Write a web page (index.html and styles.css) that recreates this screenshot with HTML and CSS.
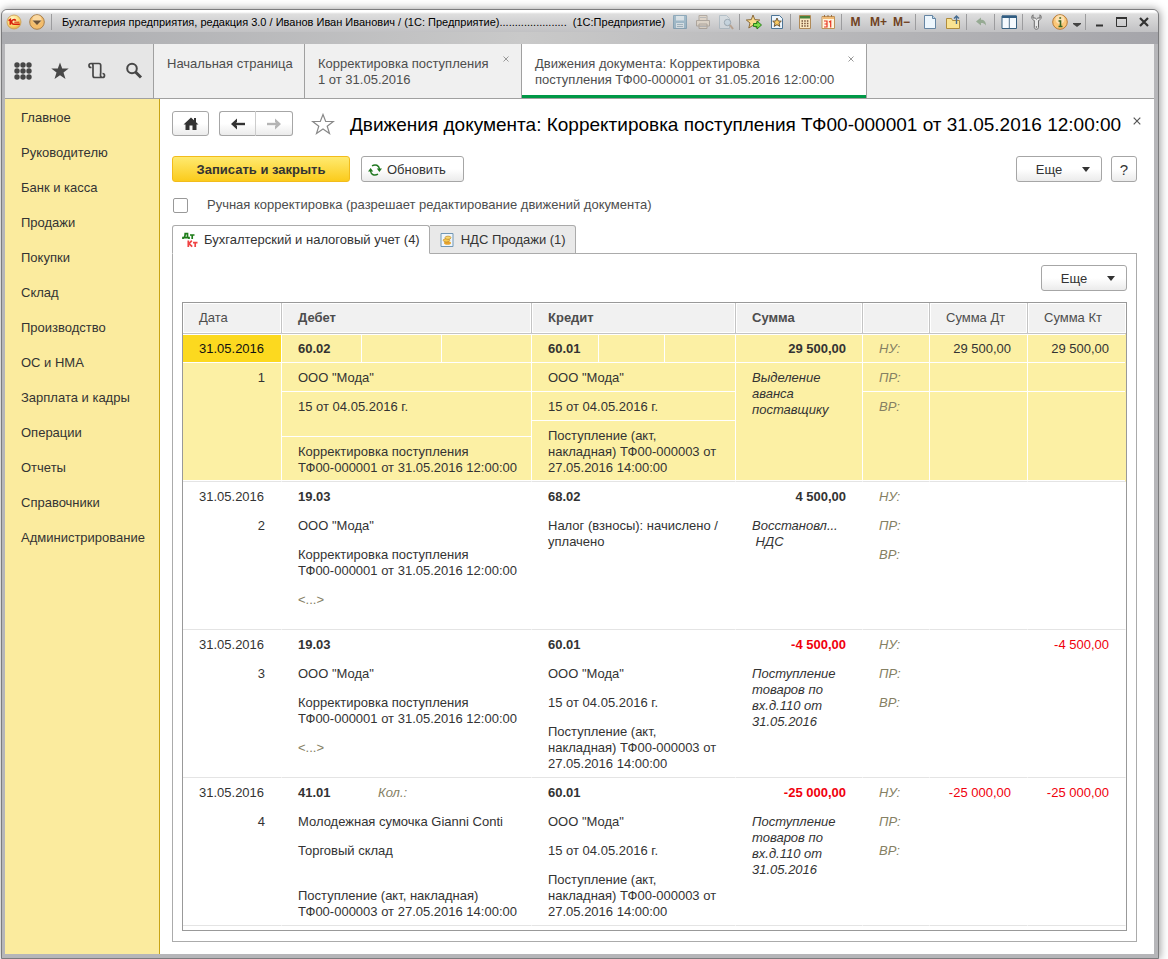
FILE: index.html
```html
<!DOCTYPE html>
<html lang="ru">
<head>
<meta charset="utf-8">
<title>Движения документа</title>
<link rel="stylesheet" href="styles.css">
</head>
<body>
<div class="window">
  <header class="titlebar">
    <svg class="logo" viewBox="0 0 16 16"><defs><radialGradient id="gold" cx=".4" cy=".3" r=".8"><stop offset="0" stop-color="#fffbd0"/><stop offset=".6" stop-color="#fbd66b"/><stop offset="1" stop-color="#d99a3c"/></radialGradient></defs><circle cx="8" cy="8" r="7" fill="url(#gold)" stroke="#c99a55" stroke-width=".8"/><path d="M2.500 6.600 4.300 5.500V10.800M9.800 6.600A2.300 2.300 0 1 0 8.300 10.200H13.800" fill="none" stroke="#d8200c" stroke-width="1.600"/><path d="M8.300 8.200h5" stroke="#d8200c"/></svg>
    <button class="round" aria-label="Меню"><svg viewBox="0 0 16 16"><circle cx="8" cy="8" r="7.300" fill="#f3bd6c" stroke="#a87f4c"/><circle cx="8" cy="5.500" r="4.500" fill="#fde6b8" opacity=".7"/><path d="M3.500 6.500h9L8 11z" fill="#6b5238"/></svg></button>
    <i class="sep"></i>
    <div class="caption">Бухгалтерия предприятия, редакция 3.0 / Иванов Иван Иванович / (1С: Предприятие)......................  (1С:Предприятие)</div>
    <div class="tools">
      <button class="dim" aria-label="Сохранить"><svg viewBox="0 0 16 16"><path d="M1.500 1.500h13v13h-13z" fill="#6fa0bd" stroke="#46799a"/><path d="M4 2h8v4.500H4zM4 9h8v5H4z" fill="#dcecf4"/><path d="M5 10.500h6M5 12.500h6" stroke="#7597aa"/></svg></button>
      <button class="dim" aria-label="Печать"><svg viewBox="0 0 16 16"><path d="M4 6V1.500h8V6M1.500 12V6.500h13V12zM4 10h8v4.500H4z" fill="#e5d3bb" stroke="#8b7c6b"/><path d="M5 3.500h6M5 12.500h6" stroke="#999"/></svg></button>
      <button class="dim" aria-label="Просмотр"><svg viewBox="0 0 16 16"><path d="M1.500 1.500h7l3 3v10h-10z" fill="#d5e0e8" stroke="#91a7b5"/><circle cx="9.500" cy="8.500" r="3.200" fill="#b9d5e8" stroke="#667f90"/><path d="m12 11 3 4" stroke="#a57a55" stroke-width="2"/></svg></button>
      <i class="sep"></i>
      <button aria-label="Добавить в избранное"><svg viewBox="0 0 16 16"><path d="m7 1 1.800 4.600 5 .4-3.800 3 1.200 5L7 11.300 2.800 14 4 9 .3 6l5-.4z" fill="#fbdc8c" stroke="#8b6b3c"/><path d="M7.500 9.500h3.500V7l4.500 4-4.500 4v-2.500H7.500z" fill="#7fdc48" stroke="#28801c"/></svg></button>
      <button aria-label="Избранное"><svg viewBox="0 0 16 16"><path d="M2.500 1.500h8l3 3v10h-11z" fill="#eef6fd" stroke="#4d7596"/><path d="m8 4 1.300 3 3 .2L10 9.200l.8 3.200L8 10.700l-2.800 1.700.8-3.200-2.300-2 3-.2z" fill="#f8ca62" stroke="#6e5737"/></svg></button>
      <i class="sep"></i>
      <button aria-label="Калькулятор"><svg viewBox="0 0 16 16"><path d="M2.500 1.500h11v13h-11z" fill="#fbe8c2" stroke="#b08a58"/><path d="M3 2h10v2.500H3z" fill="#47823c"/><path d="M4.500 7h7M4.500 9.500h7M4.500 12h7" stroke="#765239" stroke-width="1.300" stroke-dasharray="1.500 1.200"/></svg></button>
      <button aria-label="Календарь"><svg viewBox="0 0 16 16"><path d="M2 2.500h12.500v12H2z" fill="#fff5df" stroke="#be9259"/><path d="M2.500 3h11.500v2H2.500z" fill="#f1bb77"/><path d="M4.500 1v2M8 1v2M11.500 1v2" stroke="#9b7147"/><path d="M4 7h3v6H4M4.500 10H7M9 8l1.700-1v6.500" fill="none" stroke="#e83421" stroke-width="1.200"/></svg></button>
      <i class="sep"></i>
      <button class="memory">M</button><button class="memory">M+</button><button class="memory">M−</button>
      <i class="sep"></i>
      <button aria-label="Новый"><svg viewBox="0 0 16 16"><path d="M2.500 1.500h8l3 3v10h-11z" fill="#edf6fd" stroke="#6585a3"/><path d="M10.500 1.500v3h3" fill="#c3dbea" stroke="#6585a3"/></svg></button>
      <button aria-label="Открыть"><svg viewBox="0 0 16 16"><path d="M1.500 4.500h5l1 2h7v8h-13z" fill="#fae391" stroke="#b08c3d"/><path d="M11.500 10V2M9 4.500 11.500 2 14 4.500" fill="none" stroke="#476d91" stroke-width="1.400"/></svg></button>
      <i class="sep"></i>
      <button aria-label="Назад"><svg viewBox="0 0 16 16"><path d="m3 7.500 5-4v2.300c3 0 5 2 5 5.700-1.300-2-3-2.500-5-2.500v2.500z" fill="#96aa93"/></svg></button>
      <i class="sep"></i>
      <button aria-label="Панели"><svg viewBox="0 0 16 16"><path d="M1 2h14.500v12.500H1z" fill="#f5fafe" stroke="#376080"/><path d="M1 1.500h14.500v2.500H1z" fill="#315d82"/><path d="M8.300 4v10" stroke="#54758f"/></svg></button>
      <i class="sep"></i>
      <button aria-label="Настройки"><svg viewBox="0 0 16 16"><path d="M4 .8c-2 1.700-1.500 4.700 1.300 5.700v7c0 2.300 4.200 2.300 4.200 0v-7C12.500 5.500 13 2.500 11 .8V4H8.800L7.500 5.200 6.200 4H4z" fill="#e9e9e9" stroke="#6b6b6b"/><circle cx="7.400" cy="13" r=".8" fill="#555"/></svg></button>
      <button aria-label="Справка"><svg viewBox="0 0 16 16"><circle cx="8" cy="8" r="7.300" fill="#fbc778" stroke="#b87a35"/><circle cx="8" cy="5.500" r="4.500" fill="#fdebc8" opacity=".7"/><path d="M6.500 7H8.500v5.500M6.500 12.500h4M7.300 4h1.800" fill="none" stroke="#386623" stroke-width="1.600"/></svg></button>
      <button class="narrow" aria-label="Ещё"><svg viewBox="0 0 10 16"><path d="M1 9h8v1L5 13 1 10z" fill="#444"/></svg></button>
      <i class="sep"></i>
      <button aria-label="Свернуть"><svg viewBox="0 0 16 16"><path d="M4 11.500h7" stroke="#333" stroke-width="2"/></svg></button>
      <button aria-label="Развернуть"><svg viewBox="0 0 16 16"><path d="M1.500 4h10v8.500h-10z" fill="none" stroke="#333" stroke-width="1"/><path d="M1 4h11" stroke="#333" stroke-width="2"/></svg></button>
      <button aria-label="Закрыть"><svg viewBox="0 0 16 16"><path d="m2 4 8 8M10 4l-8 8" stroke="#333" stroke-width="2.200"/></svg></button>
    </div>
  </header>

  <div class="client">
    <nav class="tabbar">
      <div class="launch">
        <button aria-label="Разделы"><svg viewBox="0 0 18 18" fill="#474747"><circle cx="3" cy="3" r="2.700"/><circle cx="9" cy="3" r="2.700"/><circle cx="15" cy="3" r="2.700"/><circle cx="3" cy="9" r="2.700"/><circle cx="9" cy="9" r="2.700"/><circle cx="15" cy="9" r="2.700"/><circle cx="3" cy="15" r="2.700"/><circle cx="9" cy="15" r="2.700"/><circle cx="15" cy="15" r="2.700"/></svg></button>
        <button aria-label="Избранное"><svg viewBox="0 0 18 18"><path d="m9 .5 2.200 6h6.500l-5.200 4 2 6.500L9 13.200 3.500 17l2-6.500-5.200-4h6.500z" fill="#474747"/></svg></button>
        <button aria-label="История"><svg viewBox="0 0 18 18"><path d="M3.500 5.500H3a2 2 0 1 1 2-2v10c0 1.400.7 2 1.700 2h7.800M3 1.500h8c1 0 1.700.7 1.700 1.700v8.300M14.500 11.500a2 2 0 1 1-2 2v-2" fill="none" stroke="#474747" stroke-width="1.700"/></svg></button>
        <button aria-label="Поиск"><svg viewBox="0 0 18 18"><circle cx="7" cy="6.500" r="4.800" fill="none" stroke="#474747" stroke-width="2"/><path d="m10.500 10 5.500 5.500" stroke="#474747" stroke-width="3"/></svg></button>
      </div>
      <div class="page-tab home"><a href="#">Начальная страница</a></div>
      <div class="page-tab second"><a href="#">Корректировка поступления<br>1 от 31.05.2016</a><button class="close" aria-label="Закрыть"><svg viewBox="0 0 6 6"><path d="m.5.5 5 5m0-5-5 5"/></svg></button></div>
      <div class="page-tab third current"><a href="#">Движения документа: Корректировка<br>поступления ТФ00-000001 от 31.05.2016 12:00:00</a><button class="close" aria-label="Закрыть"><svg viewBox="0 0 6 6"><path d="m.5.5 5 5m0-5-5 5"/></svg></button></div>
    </nav>

    <div class="body">
      <nav class="sections">
        <a href="#">Главное</a><a href="#">Руководителю</a><a href="#">Банк и касса</a><a href="#">Продажи</a><a href="#">Покупки</a><a href="#">Склад</a><a href="#">Производство</a><a href="#">ОС и НМА</a><a href="#">Зарплата и кадры</a><a href="#">Операции</a><a href="#">Отчеты</a><a href="#">Справочники</a><a href="#">Администрирование</a>
      </nav>
      <main class="form">
        <div class="heading">
          <button class="btn home-btn" aria-label="Домой"><svg viewBox="0 0 16 14"><path d="M8 .5 15.500 7.500H13.500V13H9.500V8.500h-3V13H2.500V7.500H.5z" fill="#333"/><path d="M12 1v4" stroke="#333" stroke-width="2"/></svg></button>
          <div class="history">
            <button class="btn" aria-label="Назад"><svg viewBox="0 0 16 12"><path d="M15 6H4" stroke="#333" stroke-width="2.400"/><path d="M7 .5 1 6l6 5.500V8L5 6l2-2z" fill="#333"/></svg></button>
            <button class="btn" aria-label="Вперед"><svg viewBox="0 0 16 12"><path d="M1 6h11" stroke="#b5b5b5" stroke-width="2.400"/><path d="m9 .5 6 5.500-6 5.500V8l2-2-2-2z" fill="#b5b5b5"/></svg></button>
          </div>
          <button class="star" aria-label="В избранное"><svg viewBox="0 0 24 22"><path d="m12 1.500 2.700 7h7.600l-6.100 4.700 2.300 7.300L12 16l-6.500 4.500 2.300-7.300L1.700 8.500h7.600z" fill="#fff" stroke="#888" stroke-width="1.200"/></svg></button>
          <h1>Движения документа: Корректировка поступления ТФ00-000001 от 31.05.2016 12:00:00</h1>
          <button class="form-close" aria-label="Закрыть"><svg viewBox="0 0 8 8"><path d="m.7.7 6.600 6.600m0-6.600L.7 7.300" stroke="#555" stroke-width="1.200"/></svg></button>
        </div>

        <div class="commands">
          <button class="btn primary">Записать и закрыть</button>
          <button class="btn refresh"><svg viewBox="0 0 14 12"><path d="M4 1.800c3.500-2 7-.4 7.500 3.200M10 10.200C6.500 12.200 3 10.600 2.500 7" fill="none" stroke="#217821" stroke-width="1.500"/><path d="M8.800 4.500H14L11.400 8zM0 7.500h5.200L2.600 4z" fill="#217821"/></svg>Обновить</button>
          <button class="btn more">Еще<i class="caret"></i></button>
          <button class="btn help">?</button>
        </div>

        <label class="manual"><input type="checkbox">Ручная корректировка (разрешает редактирование движений документа)</label>

        <div class="tabs" role="tablist">
          <button class="tab active" role="tab" aria-selected="true"><svg viewBox="0 0 16 16" fill="none"><path d="M1 7V5.700h6V7M2.300 5.500C3.200 4 3.200 2.700 3.200 1.700h2.300v4M8 3h4.500M10.200 3v4" stroke="#1f7d1a" stroke-width="1.700"/><path d="M6.300 8.500v6.500M9.800 8.700 7 11.700l3.200 3M11 10.700h4.500M13.200 10.700v4.300" stroke="#f04343" stroke-width="1.700"/></svg>Бухгалтерский и налоговый учет (4)</button>
          <button class="tab" role="tab" aria-selected="false"><svg viewBox="0 0 16 16"><path d="M2 1.500h12v13H2z" fill="#eff6fc" stroke="#7197b5"/><ellipse cx="8.500" cy="11" rx="3.500" ry="1.800" fill="#e7a52d"/><ellipse cx="7.500" cy="8.300" rx="3.300" ry="1.700" fill="#f7ca50" stroke="#b67c22" stroke-width=".6"/><ellipse cx="9" cy="5.700" rx="3" ry="1.600" fill="#f9d76c" stroke="#b67c22" stroke-width=".6"/></svg>НДС Продажи (1)</button>
        </div>
        <section class="panel">
          <button class="btn more">Еще<i class="caret"></i></button>
          <div class="grid">
            <table>
              <colgroup><col class="c-date"><col class="c-debit"><col class="c-credit"><col class="c-sum"><col class="c-kind"><col class="c-amt"><col class="c-amt"></colgroup>
              <thead><tr><th>Дата</th><th class="strong">Дебет</th><th class="strong">Кредит</th><th class="strong">Сумма</th><th></th><th>Сумма Дт</th><th>Сумма Кт</th></tr></thead>
              <tbody>
                <tr class="selected">
                  <td><div class="item focus">31.05.2016</div><div class="item num">1</div></td>
                  <td><div class="accounts"><b>60.02</b><span></span><span></span></div><div class="item">ООО "Мода"</div><div class="item tall">15 от 04.05.2016 г.</div><div class="item">Корректировка поступления<br>ТФ00-000001 от 31.05.2016 12:00:00</div></td>
                  <td><div class="accounts credit"><b>60.01</b><span></span><span></span></div><div class="item">ООО "Мода"</div><div class="item">15 от 04.05.2016 г.</div><div class="item">Поступление (акт,<br>накладная) ТФ00-000003 от<br>27.05.2016 14:00:00</div></td>
                  <td><div class="item num strong">29 500,00</div><div class="item note">Выделение<br>аванса<br>поставщику</div></td>
                  <td class="kind"><div class="item">НУ:</div><div class="item">ПР:</div><div class="item">ВР:</div></td>
                  <td><div class="item num">29 500,00</div><div class="item"></div><div class="item"></div></td>
                  <td><div class="item num">29 500,00</div><div class="item"></div><div class="item"></div></td>
                </tr>
                <tr>
                  <td><div class="item">31.05.2016</div><div class="item num">2</div></td>
                  <td><div class="accounts"><b>19.03</b></div><div class="item">ООО "Мода"</div><div class="item">Корректировка поступления<br>ТФ00-000001 от 31.05.2016 12:00:00</div><div class="item blank">&lt;...&gt;</div></td>
                  <td><div class="accounts credit"><b>68.02</b></div><div class="item">Налог (взносы): начислено /<br>уплачено</div></td>
                  <td><div class="item num strong">4 500,00</div><div class="item note">Восстановл...<br>&nbsp;НДС</div></td>
                  <td class="kind"><div class="item">НУ:</div><div class="item">ПР:</div><div class="item">ВР:</div></td>
                  <td></td><td></td>
                </tr>
                <tr>
                  <td><div class="item">31.05.2016</div><div class="item num">3</div></td>
                  <td><div class="accounts"><b>19.03</b></div><div class="item">ООО "Мода"</div><div class="item">Корректировка поступления<br>ТФ00-000001 от 31.05.2016 12:00:00</div><div class="item blank">&lt;...&gt;</div></td>
                  <td><div class="accounts credit"><b>60.01</b></div><div class="item">ООО "Мода"</div><div class="item">15 от 04.05.2016 г.</div><div class="item">Поступление (акт,<br>накладная) ТФ00-000003 от<br>27.05.2016 14:00:00</div></td>
                  <td><div class="item num strong negative">-4 500,00</div><div class="item note">Поступление<br>товаров по<br>вх.д.110 от<br>31.05.2016</div></td>
                  <td class="kind"><div class="item">НУ:</div><div class="item">ПР:</div><div class="item">ВР:</div></td>
                  <td></td>
                  <td><div class="item num negative">-4 500,00</div></td>
                </tr>
                <tr>
                  <td><div class="item">31.05.2016</div><div class="item num">4</div></td>
                  <td><div class="accounts"><b>41.01</b><span class="quantity">Кол.:</span></div><div class="item">Молодежная сумочка Gianni Conti</div><div class="item tall">Торговый склад</div><div class="item">Поступление (акт, накладная)<br>ТФ00-000003 от 27.05.2016 14:00:00</div></td>
                  <td><div class="accounts credit"><b>60.01</b></div><div class="item">ООО "Мода"</div><div class="item">15 от 04.05.2016 г.</div><div class="item">Поступление (акт,<br>накладная) ТФ00-000003 от<br>27.05.2016 14:00:00</div></td>
                  <td><div class="item num strong negative">-25 000,00</div><div class="item note">Поступление<br>товаров по<br>вх.д.110 от<br>31.05.2016</div></td>
                  <td class="kind"><div class="item">НУ:</div><div class="item">ПР:</div><div class="item">ВР:</div></td>
                  <td><div class="item num negative">-25 000,00</div></td>
                  <td><div class="item num negative">-25 000,00</div></td>
                </tr>
              </tbody>
            </table>
          </div>
        </section>
      </main>
    </div>
  </div>
</div>
</body>
</html>
```
FILE: styles.css
```css
* { box-sizing: border-box; }

body {
  margin: 0;
  padding: 9px 9px 0 1px;
  min-height: 100vh;
  display: flex;
  background: #fff;
  color: #333;
  font: 13px/16px "Liberation Sans", Arial, sans-serif;
}

a { color: inherit; text-decoration: none; }

button {
  margin: 0;
  padding: 0;
  border: 0;
  background: none;
  color: inherit;
  font: inherit;
}

svg { display: block; flex: none; }

.window {
  flex: 1;
  min-width: 0;
  display: flex;
  flex-direction: column;
  padding: 0 4px 4px 3px;
  border: 1px solid #7c7c7e;
  border-radius: 6px 6px 0 0;
  background: #b6b6b9;
  box-shadow: 1px 0 8px #999;
}

/* Title bar */
.titlebar {
  height: 34px;
  margin: 0 -4px 0 -3px;
  padding: 0 1px 10px 4px;
  display: flex;
  align-items: center;
  border-radius: 5px 5px 0 0;
  background:
    linear-gradient(#fff 0, #fff 2px, #dedede 4px, #c1c1c3 100%) 0 0 / 100% 22px no-repeat,
    linear-gradient(90deg, #aaabaf, #c9c9c9 45%, #a5a5aa);
}

.logo { width: 16px; height: 16px; margin-right: 7px; }
.round svg { width: 16px; height: 16px; }
.round { margin-right: 4px; }

.sep {
  flex: none;
  width: 1px;
  height: 16px;
  margin: 0 2px;
  background: #9c9c9e;
}

.caption {
  flex: 1;
  min-width: 0;
  margin-left: 8px;
  overflow: hidden;
  white-space: pre;
  color: #000;
  font-size: 11px;
}

.tools { display: flex; align-items: center; }
.tools button { width: 23px; display: grid; place-items: center; }
.tools svg { width: 16px; height: 16px; }
.tools .narrow { width: 12px; }
.tools .narrow svg { width: 10px; }
.tools .dim { opacity: .5; }
.tools .memory { color: #70421f; font-size: 12px; font-weight: bold; }

/* Page tabs */
.client {
  flex: 1;
  display: flex;
  flex-direction: column;
  background: #fff;
}

.tabbar {
  height: 55px;
  display: flex;
  border-bottom: 1px solid #a0a0a0;
  background: #f0f0f0;
  color: #4d4d4d;
}

.launch {
  width: 149px;
  padding: 0 10px 0 9px;
  display: flex;
  align-items: center;
  justify-content: space-between;
  border-right: 1px solid #a0a0a0;
  background: #e6e6e6;
}

.launch svg { width: 18px; height: 18px; }

.page-tab {
  position: relative;
  padding: 12px 12px 0 13px;
  border-right: 1px solid #a0a0a0;
  white-space: nowrap;
}

.home { width: 151px; }
.second { width: 217px; }
.third { width: 345px; }
.current { background: #fff; box-shadow: inset 0 -3px #009846; }

.close { position: absolute; top: 12px; right: 12px; }
.close svg { width: 6px; height: 6px; fill: none; stroke: #999; }

/* Sections */
.body { flex: 1; display: flex; }

.sections {
  width: 155px;
  padding: 1px 0;
  display: flex;
  flex-direction: column;
  border-right: 1px solid #c8a415;
  background: #fbeb9e;
}

.sections a { padding: 10px 0 9px 16px; }

/* Form */
.form {
  flex: 1;
  min-width: 0;
  padding: 12px 17px 12px 12px;
  display: flex;
  flex-direction: column;
}

.btn {
  height: 26px;
  padding-top: 1px;
  display: flex;
  align-items: center;
  justify-content: center;
  border: 1px solid #a6a6a6;
  border-radius: 3px;
  background: linear-gradient(#fff 50%, #ebebeb);
}

.heading { height: 25px; display: flex; align-items: center; }
.heading .btn { width: 37px; height: 25px; padding: 0; }
.home-btn svg { width: 16px; height: 14px; }
.history { margin-left: 10px; display: flex; }
.history svg { width: 16px; height: 12px; }
.history .btn:first-child { border-radius: 3px 0 0 3px; border-right-color: #ccc; }
.history .btn:last-child { border-left: 0; border-radius: 0 3px 3px 0; }
.star { margin: 0 15px 0 18px; }
.star svg { width: 24px; height: 22px; }

h1 {
  margin: 2px 0 0;
  flex: 1;
  white-space: nowrap;
  color: #000;
  font-size: 19px;
  font-weight: normal;
  line-height: 24px;
}

.form-close { align-self: flex-start; margin: 6px -4px 0 0; }
.form-close svg { width: 8px; height: 8px; }

.commands { margin-top: 20px; display: flex; }

.primary {
  width: 178px;
  margin-right: 11px;
  border-color: #f2bc1c;
  background: linear-gradient(#ffea70, #fbcb1c);
  font-weight: bold;
}

.refresh { width: 103px; gap: 5px; justify-content: flex-start; padding-left: 6px; }
.refresh svg { width: 14px; height: 12px; }
.more { width: 86px; gap: 20px; padding-left: 8px; margin-left: auto; }
.help { width: 26px; margin-left: 9px; font-size: 15px; }

.caret {
  border: 4px solid transparent;
  border-top: 5px solid #333;
  border-bottom: 0;
}

.manual {
  margin: 15px 0 12px;
  display: flex;
  align-items: center;
  color: #4d4d4d;
}

.manual input {
  appearance: none;
  width: 15px;
  height: 15px;
  margin: 0 19px 0 1px;
  border: 1px solid #999;
  border-radius: 2px;
  background: #fff;
}

/* Register tabs */
.tabs { display: flex; margin-bottom: -1px; position: relative; }

.tab {
  height: 29px;
  padding: 0 9px;
  display: flex;
  align-items: center;
  gap: 6px;
  border: 1px solid #ababab;
  border-left: 0;
  border-radius: 0 3px 0 0;
  background: #e9e9e9;
}

.tab svg { width: 16px; height: 16px; }

.tab.active {
  border-left: 1px solid #ababab;
  border-bottom-color: #fff;
  border-radius: 3px 3px 0 0;
  background: #fff;
}

.panel {
  flex: 1;
  padding: 11px 9px 10px;
  border: 1px solid #ababab;
  display: flex;
  flex-direction: column;
}

/* Postings */
.grid {
  flex: 1;
  margin-top: 11px;
  padding-bottom: 4px;
  border: 1px solid #999;
}

table {
  width: 100%;
  table-layout: fixed;
  border-collapse: separate;
  border-spacing: 0;
}

.c-date { width: 99px; }
.c-debit { width: 250px; }
.c-credit { width: 204px; }
.c-sum { width: 127px; }
.c-kind { width: 67px; }
.c-amt { width: 98px; }

th {
  height: 31px;
  padding: 0 16px;
  border: solid #c4c4c4;
  border-width: 0 1px 1px 0;
  background: #f1f1f1;
  box-shadow: inset 0 0 0 1px #fff;
  color: #4d4d4d;
  font-weight: normal;
  text-align: left;
}

th:last-child { border-right: 0; }
.strong { font-weight: bold; }

td {
  height: 148px;
  padding: 0;
  border-bottom: 1px solid #e4e4e4;
  border-right: 1px solid transparent;
  vertical-align: top;
}

.item {
  min-height: 29px;
  padding: 7px 16px 5px 16px;
  border-bottom: 1px solid transparent;
  white-space: nowrap;
}

.item:last-child { border-bottom: 0; }
.item.tall { min-height: 45px; }
.num { text-align: right; }
.note { font-style: italic; }
.kind, .blank, .quantity { color: #858063; }
.kind, .quantity { font-style: italic; }
.negative { color: #f0000c; }

.accounts {
  height: 29px;
  display: grid;
  grid-template-columns: 80px 80px 1fr;
  border-bottom: 1px solid transparent;
}

.accounts.credit { grid-template-columns: 67px 66px 1fr; }
.accounts > * { padding: 7px 0 5px 16px; border-right: 1px solid transparent; }

.selected td {
  border-right-color: #fff;
  background: #fcf0a4;
  box-shadow: inset 0 1px #fff, inset 0 -1px #fff;
}

.selected td:last-child { border-right-color: #fcf0a4; }
.selected .item, .selected .accounts { border-color: #fff; }
.selected .accounts > :not(:last-child) { border-color: #fff; }
.selected .focus { background: #fcd91f; box-shadow: inset 0 1px #fff; color: #111; }
```
